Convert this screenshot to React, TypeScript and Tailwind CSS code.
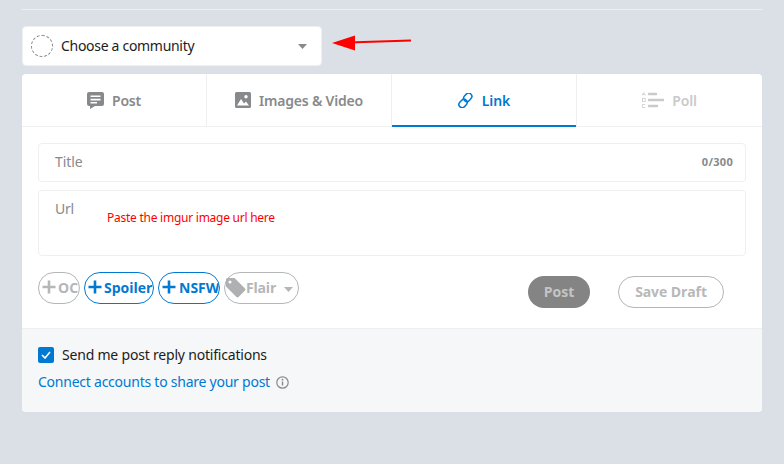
import React from "react";

const Plus = ({ c }: { c: string }) => (
  <svg width="14" height="14" viewBox="0 0 14 14" className="shrink-0">
    <path d="M7 0.500v13M0.500 7h13" stroke={c} strokeWidth="2.600" />
  </svg>
);

function Tab({ label, icon, cls, width }: { label: string; icon: React.ReactNode; cls: string; width: string }) {
  return (
    <div className={`flex items-center justify-center gap-[8px] text-[14px] font-semibold tracking-[-0.2px] ${cls} ${width}`}>
      {icon}
      <span>{label}</span>
    </div>
  );
}

export default function App() {
  return (
    <div className="relative w-[784px] h-[464px] bg-[#dae0e6] overflow-hidden px-[22px] pt-[9px] font-['Noto_Sans',sans-serif]">
      <div className="h-px bg-[#edeff1]" />
      <div className="mt-[16px] w-[300px] h-[40px] bg-white rounded-[4px] border border-[#edeff1] flex items-center pl-[8px] pr-[14px]">
        <span className="w-[22px] h-[22px] rounded-full border border-dashed border-[#878a8c]" />
        <span className="ml-[8px] -mt-px text-[14px] text-[#1c1c1c] tracking-[-0.3px]">Choose a community</span>
        <svg width="9" height="5" viewBox="0 0 9 5" className="ml-auto mt-[1px]"><path d="M0 0h9L4.500 5z" fill="#878a8c" /></svg>
      </div>

      <svg width="84" height="20" viewBox="0 0 84 20" className="absolute left-[330px] top-[33px]">
        <path d="M18 9.500 L81 7.500" stroke="#ff0000" strokeWidth="2.200" />
        <path d="M2 10 L25 2.500 V17.500 Z" fill="#ff0000" />
      </svg>

      <div className="mt-[8px] w-[740px] h-[338px] bg-white rounded-[4px] flex flex-col overflow-hidden">
        <div className="h-[53px] flex border-b border-[#edeff1]">
          <Tab
            label="Post"
            width="w-[185px] border-r border-[#edeff1]"
            cls="text-[#878a8c]"
            icon={
              <svg width="17" height="17" viewBox="0 0 17 17">
                <path fillRule="evenodd" fill="#878a8c" d="M2 0h13a2 2 0 0 1 2 2v10a2 2 0 0 1-2 2H8l-5 3v-3H2a2 2 0 0 1-2-2V2a2 2 0 0 1 2-2zM3.500 3.500v1.600h10V3.500zM3.500 6.800v1.600h10V6.800zM3.500 10v1.600h6.500V10z" />
              </svg>
            }
          />
          <Tab
            label="Images & Video"
            width="w-[185px] border-r border-[#edeff1]"
            cls="text-[#878a8c]"
            icon={
              <svg width="16" height="16" viewBox="0 0 16 16">
                <path fillRule="evenodd" fill="#878a8c" d="M1.500 0h13A1.500 1.500 0 0 1 16 1.500v13a1.500 1.500 0 0 1-1.500 1.500h-13A1.500 1.500 0 0 1 0 14.500v-13A1.500 1.500 0 0 1 1.500 0zM11 3a1.700 1.700 0 1 0 0 3.400A1.700 1.700 0 0 0 11 3zM2 13.500h12l-3-4-2 2-3-4.500z" />
              </svg>
            }
          />
          <div className="w-[185px] relative flex items-center justify-center gap-[9px] text-[14px] font-semibold tracking-[-0.1px] text-[#0079d3] border-r border-[#edeff1] mb-[-1px]">
            <svg width="15" height="15" viewBox="0 0 15 15" fill="none" stroke="#0079d3" strokeWidth="1.500">
              <rect x="6.500" y="-0.200" width="6.500" height="9" rx="3.250" transform="rotate(42 9.750 4.300)" />
              <rect x="1.800" y="6" width="6.500" height="9" rx="3.250" transform="rotate(42 5.050 10.500)" />
            </svg>
            <span>Link</span>
            <span className="absolute left-0 right-0 bottom-0 h-[2px] bg-[#0079d3]" />
          </div>
          <Tab
            label="Poll"
            width="w-[185px]"
            cls="text-[#c9cacb]"
            icon={
              <svg width="22" height="16" viewBox="0 0 22 16">
                <path d="M7 2h7M7 8h15M7 14h8" stroke="#c9cacb" strokeWidth="2.400" strokeLinecap="round" />
                <g fill="none" stroke="#c9cacb" strokeWidth="0.800">
                  <path d="M0 3.500 1.700.5l1.700 3M.8 2.500h1.800" />
                  <rect x="0.400" y="6.300" width="2.800" height="3.200" />
                  <path d="M3.200 12.500H.5v3h2.700" />
                </g>
              </svg>
            }
          />
        </div>

        <div className="flex-1 px-[16px] pt-[16px]">
          <div className="h-[39px] rounded-[4px] border border-[#edeff1] flex items-center justify-between pl-[16px] pr-[12px]">
            <span className="-mt-[3px] text-[14px] text-[#878a8c] tracking-[-0.1px]">Title</span>
            <span className="text-[11px] font-bold text-[#878a8c] tracking-[0.3px] font-['Open_Sans',sans-serif]">0/300</span>
          </div>
          <div className="relative mt-[8px] h-[66px] rounded-[4px] border border-[#edeff1] pl-[16px] pt-[8px]">
            <span className="text-[14px] leading-[20px] text-[#878a8c] block tracking-[-0.2px]">Url</span>
            <span className="absolute left-[68px] top-[19px] text-[12px] leading-[16px] text-[#ff0000] tracking-[-0.25px]">Paste the imgur image url here</span>
          </div>
          <div className="mt-[16px] flex items-start">
            <div className="flex items-center gap-[4px]">
              <div className="w-[42px] h-[32px] rounded-full border border-[#b4b6b7] flex items-center pl-[3px] pb-[2px] gap-[2px] text-[14px] font-bold text-[#b4b6b7] overflow-hidden font-['Open_Sans',sans-serif]">
                <Plus c="#b4b6b7" /><span>OC</span>
              </div>
              <div className="w-[70px] h-[32px] rounded-full border border-[#0079d3] flex items-center pl-[3px] pb-[2px] gap-[2px] text-[14px] font-bold text-[#0079d3] overflow-hidden font-['Open_Sans',sans-serif]">
                <Plus c="#0079d3" /><span>Spoiler</span>
              </div>
              <div className="w-[62px] h-[32px] rounded-full border border-[#0079d3] flex items-center pl-[3px] pb-[2px] gap-[3px] text-[14px] font-bold text-[#0079d3] overflow-hidden font-['Open_Sans',sans-serif]">
                <Plus c="#0079d3" /><span>NSFW</span>
              </div>
              <div className="w-[75px] h-[32px] rounded-full border border-[#b4b6b7] flex items-center pb-[2px] text-[14px] font-bold text-[#b4b6b7] tracking-[-0.2px] font-['Open_Sans',sans-serif]">
                <svg width="21" height="21" viewBox="0 0 21 21" className="shrink-0"><path fill="#aeb0b1" d="M1 2.500A1.500 1.500 0 0 1 2.500 1h7l10.500 10.500a1.500 1.500 0 0 1 0 2L13.500 20a1.500 1.500 0 0 1-2 0L1 9.500zM5 3.500a1.500 1.500 0 1 0 0 3 1.500 1.500 0 0 0 0-3z" fillRule="evenodd" /></svg>
                <span>Flair</span>
                <svg width="9" height="5" viewBox="0 0 9 5" className="ml-[8px] mt-[4px]"><path d="M0 0h9L4.500 5z" fill="#b4b6b7" /></svg>
              </div>
            </div>
            <div className="ml-[229px] mt-[4px] pb-[2px] w-[62px] h-[32px] rounded-full bg-[#848484] flex items-center justify-center text-[14px] font-bold text-[#c4c4c4] font-['Open_Sans',sans-serif]">Post</div>
            <div className="ml-[28px] mt-[4px] pb-[2px] w-[106px] h-[32px] rounded-full border border-[#b4b6b7] flex items-center justify-center text-[14px] font-bold text-[#b8b8b8] tracking-[-0.1px] font-['Open_Sans',sans-serif]">Save Draft</div>
          </div>
        </div>

        <div className="h-[84px] bg-[#f6f7f8] border-t border-[#edeff1] pl-[16px] pt-[18px]">
          <div className="flex items-center gap-[8px] h-[16px]">
            <span className="w-[16px] h-[16px] rounded-[2px] bg-[#0079d3] flex items-center justify-center">
              <svg width="10" height="8" viewBox="0 0 10 8" fill="none"><path d="M1 4l3 3 5-6" stroke="#fff" strokeWidth="1.600" /></svg>
            </span>
            <span className="-mt-[2px] text-[14px] text-[#1c1c1c] tracking-[-0.2px]">Send me post reply notifications</span>
          </div>
          <div className="mt-[10px] flex items-center gap-[6px]">
            <span className="text-[14px] leading-[18px] text-[#0079d3] tracking-[-0.24px]">Connect accounts to share your post</span>
            <svg width="13" height="13" viewBox="0 0 13 13" fill="none" className="mt-px">
              <circle cx="6.500" cy="6.500" r="5.700" stroke="#878a8c" strokeWidth="1.200" />
              <path d="M6.500 5.500v4" stroke="#878a8c" strokeWidth="1.400" />
              <circle cx="6.500" cy="3.700" r="0.900" fill="#878a8c" />
            </svg>
          </div>
        </div>
      </div>
    </div>
  );
}
